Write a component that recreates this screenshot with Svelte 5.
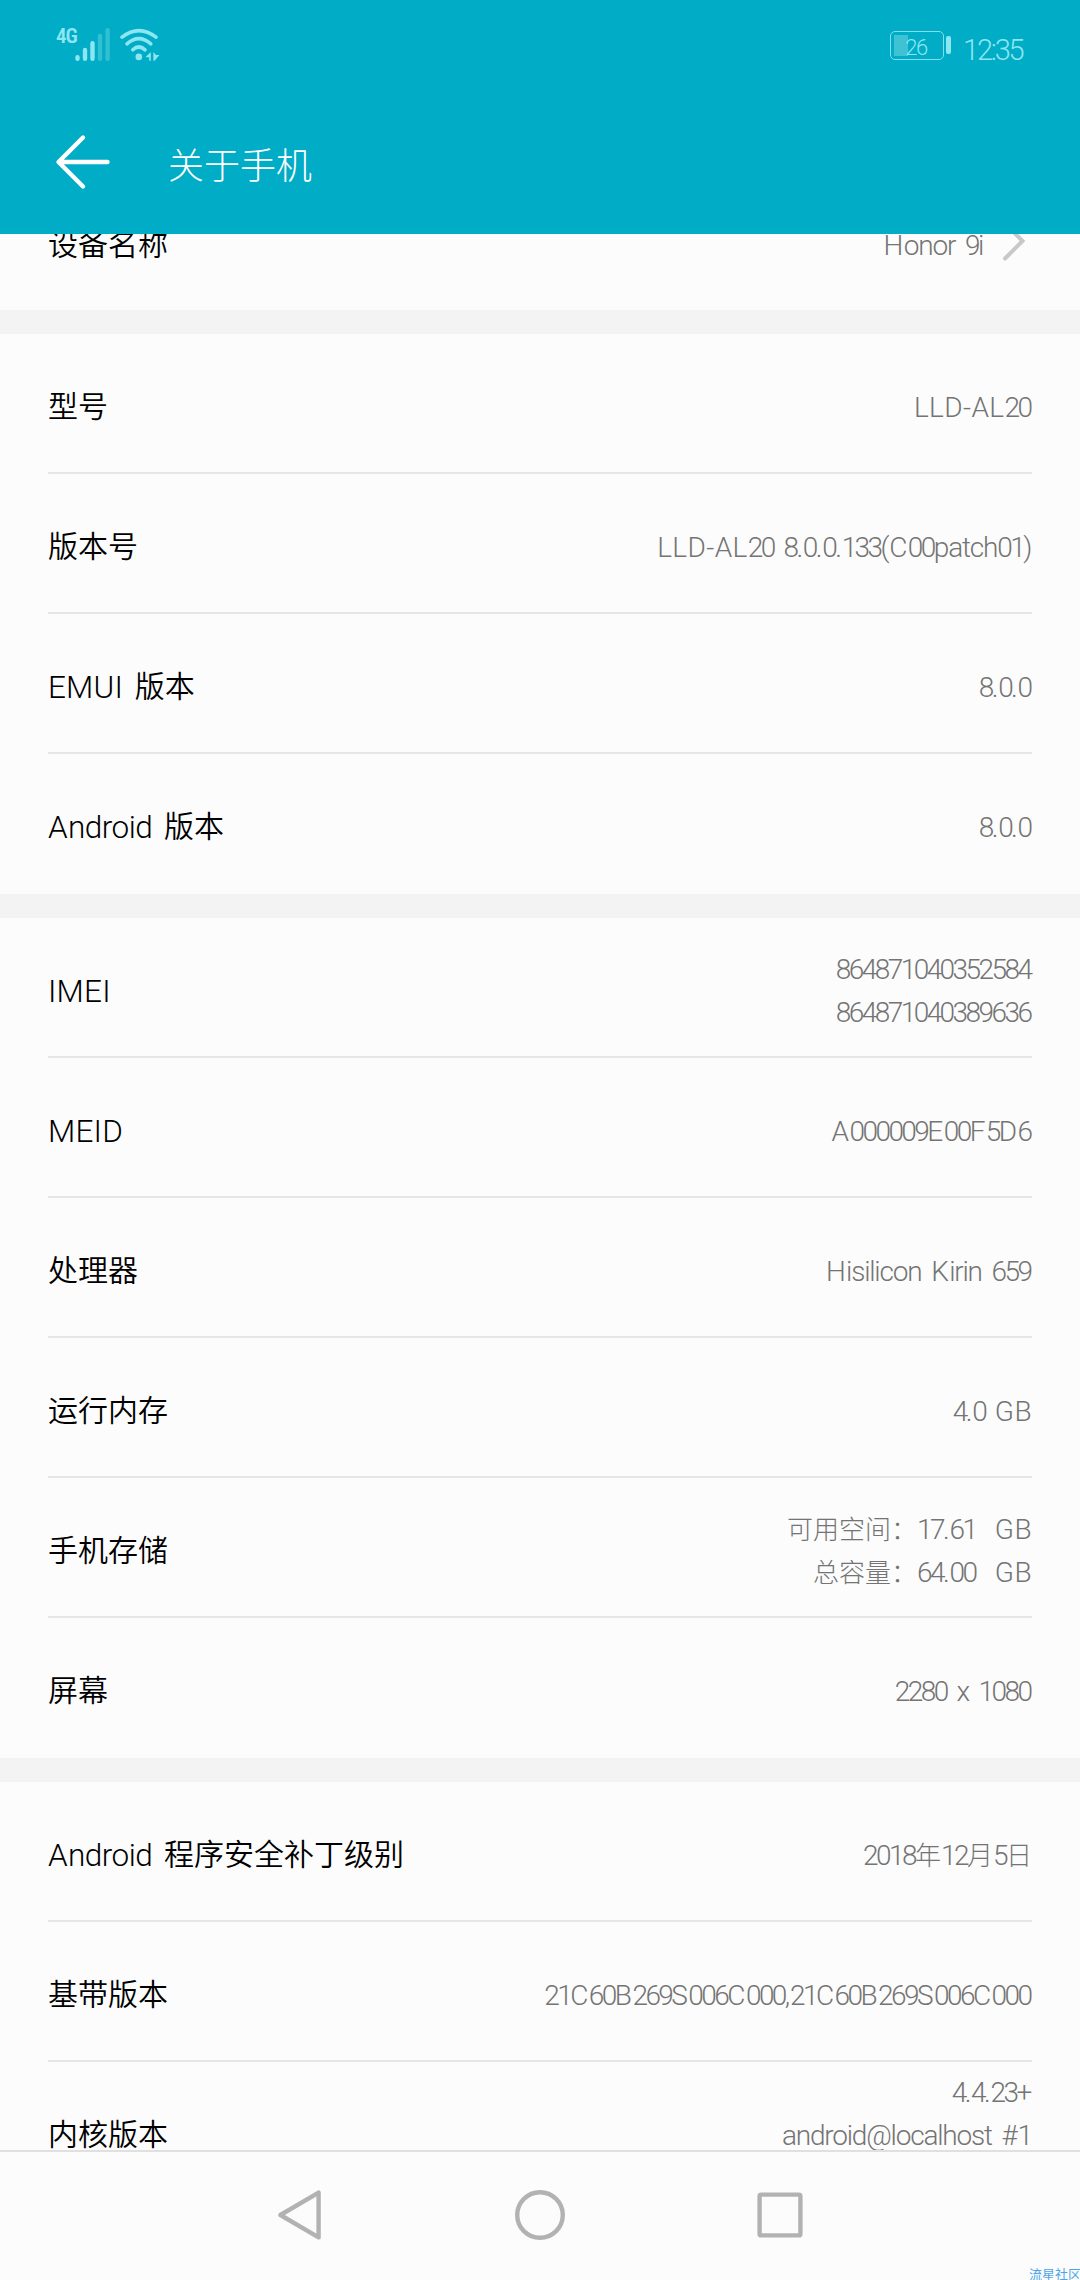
<script>
	const groups = [
		[{ label: '设备名称', values: ['Honor 9i'], link: true }],
		[
			{ label: '型号', values: ['LLD-AL20'] },
			{ label: '版本号', values: ['LLD-AL20 8.0.0.133(C00patch01)'] },
			{ label: 'EMUI 版本', values: ['8.0.0'] },
			{ label: 'Android 版本', values: ['8.0.0'] }
		],
		[
			{ label: 'IMEI', values: ['864871040352584', '864871040389636'] },
			{ label: 'MEID', values: ['A000009E00F5D6'] },
			{ label: '处理器', values: ['Hisilicon Kirin 659'] },
			{ label: '运行内存', values: ['4.0 GB'] },
			{ label: '手机存储', values: ['可用空间：17.61  GB', '总容量：64.00  GB'] },
			{ label: '屏幕', values: ['2280 x 1080'] }
		],
		[
			{ label: 'Android 程序安全补丁级别', values: ['2018年12月5日'] },
			{ label: '基带版本', values: ['21C60B269S006C000,21C60B269S006C000'] },
			{ label: '内核版本', values: ['4.4.23+', 'android@localhost #1', ''] }
		]
	]

	// digits, capitals, lowercase and Chinese are each spaced differently
	/** @param {string} text */
	function runs(text) {
		return text
			.split(/(\d+|[A-Z-]+|[a-z@]+|[\u3000-\u9fff\uff1a]+)/)
			.filter(Boolean)
			.map((t) => ({ t, kind: kindOf(t) }))
	}

	/** @param {string} t */
	function kindOf(t) {
		if (/^\d/.test(t)) return 'num'
		if (/^[A-Z]/.test(t)) return 'cap'
		if (/^[a-z@]/.test(t)) return 'low'
		return /^[\u3000-\uffff]/.test(t) ? 'han' : 'mark'
	}
</script>

{#snippet spaced(text)}{#each runs(text) as run}<span class={run.kind}>{run.t}</span>{/each}{/snippet}

<div class="screen" lang="zh-CN">
	<header>
		<div class="status">
			<span class="network">4G</span>
			<svg class="signal" width="35" height="34" viewBox="0 0 35 34">
				<g stroke-width="4.4" stroke-linecap="round">
					<path d="M2.5 29.2v1.6M10 22v8.8M17.5 15.2v15.6" stroke="#8de6f0" />
					<path d="M25 8v22.8M32.6 2.2v28.6" stroke="#33bfd3" />
				</g>
			</svg>
			<svg class="wifi" width="42" height="34" viewBox="0 0 42 34">
				<g fill="none" stroke="#8de6f0" stroke-width="3.6" stroke-linecap="round">
					<path d="M3 9.2Q20 -4 37 9.2" />
					<path d="M8 15.8Q19.8 5.6 31.8 15.8" />
					<path d="M13.8 21.8Q19.8 16.2 26 21.8" />
				</g>
				<circle cx="19.8" cy="28.9" r="3.3" fill="#8de6f0" />
				<path d="M26.6 28.9l5.2-5v8.9h-1.6v-3.2zM34.4 24v8.8h1.2L40.4 27H37z" fill="#8de6f0" />
			</svg>
			<div class="battery">
				<div class="level"></div>
				<span>26</span>
			</div>
			<div class="knob"></div>
			<time>12:35</time>
		</div>
		<div class="toolbar">
			<svg width="56" height="56" viewBox="0 0 56 56">
				<path d="M28 3.5L3.5 28L28 52.5M4.5 28H52.5" fill="none" stroke="#fff" stroke-width="4.4" stroke-linecap="round" stroke-linejoin="round" />
			</svg>
			<h1>关于手机</h1>
		</div>
	</header>

	<main>
		{#each groups as rows}
			<section>
				{#each rows as row}
					<div class="row">
						<span class="label">{@render spaced(row.label)}</span>
						<div class="value">
							{#each row.values as line}
								<p>{@render spaced(line)}</p>
							{/each}
						</div>
						{#if row.link}
							<svg width="49" height="40" viewBox="0 0 49 40">
								<path d="M22 -1.5L39.5 16L22 33.5" fill="none" stroke="#c8c8c8" stroke-width="4" stroke-linecap="round" />
							</svg>
						{/if}
					</div>
				{/each}
			</section>
		{/each}
	</main>

	<nav>
		<svg viewBox="0 0 60 60"><path d="M10.4 30L48.6 7.6V52.4Z" /></svg>
		<svg viewBox="0 0 60 60"><circle cx="30" cy="30" r="22.8" /></svg>
		<svg viewBox="0 0 60 60"><rect x="9.6" y="9.6" width="40.8" height="40.8" rx="1.5" /></svg>
	</nav>
	<span class="watermark">流星社区</span>
</div>

<style>
	:global(body) {
		background: #fcfcfc;
	}
	.screen {
		position: relative;
		display: flex;
		flex-direction: column;
		width: 1080px;
		height: 2280px;
		overflow: hidden;
		font-family: Roboto, 'Noto Sans CJK SC', sans-serif;
		font-weight: 300;
	}
	header {
		flex: none;
		height: 234px;
		background: #00acc6;
		color: #fff;
	}
	.status {
		display: flex;
		align-items: flex-start;
		height: 134px;
		padding: 28px 56px 0;
		box-sizing: border-box;
		color: #8de6f0;
	}
	.network {
		width: 19px;
		font-size: 21px;
		font-weight: 600;
		font-stretch: 75%;
		line-height: 16px;
		letter-spacing: -1px;
	}
	.wifi {
		margin-left: 9px;
	}
	.battery {
		position: relative;
		width: 54px;
		height: 29px;
		margin: 3px 2px 0 auto;
		box-sizing: border-box;
		border: 1.5px solid #7fe0ec;
		border-radius: 5px;
		font-size: 22px;
		line-height: 32px;
		text-align: center;
		letter-spacing: -1.4px;
	}
	.battery span {
		position: relative;
		margin-right: 2px;
	}
	.level {
		position: absolute;
		left: 3px;
		top: 3px;
		bottom: 3px;
		width: 14px;
		background: #40c2d5;
	}
	.knob {
		width: 5px;
		height: 18px;
		margin-top: 8px;
		border-radius: 2px;
		background: #8de6f0;
	}
	time {
		margin-left: 12px;
		width: 61px;
		font-size: 29px;
		line-height: 44px;
		letter-spacing: -2.2px;
	}
	.toolbar {
		display: flex;
		align-items: center;
		gap: 57px;
		height: 56px;
		padding-left: 55px;
	}
	h1 {
		margin: 9px 0 0;
		font-size: 36px;
		font-weight: 300;
		line-height: 50px;
	}
	main {
		flex: 1;
		min-height: 0;
		overflow: hidden;
		background: #f3f3f3;
	}
	section {
		margin-bottom: 24px;
		padding: 0 48px;
		background: #fcfcfc;
	}
	section:first-child {
		margin-top: -60px;
	}
	.row {
		display: flex;
		align-items: center;
		height: 140px;
		padding-top: 8px;
		box-sizing: border-box;
		border-bottom: 2px solid #e6e6e6;
	}
	.row:last-child {
		border-color: transparent;
	}
	section:first-child .row {
		height: 136px;
	}
	.label {
		flex: 1;
		color: #000;
		font-size: 31.5px;
		font-weight: 350;
		line-height: 42px;
		word-spacing: 4px;
	}
	.label .han {
		font-size: 30px;
	}
	.label .cap,
	.label .low {
		position: relative;
		top: 1px;
	}
	.label .cap {
		letter-spacing: 0.2px;
	}
	.label .low {
		letter-spacing: -0.5px;
	}
	.value {
		color: #747474;
		font-size: 28px;
		line-height: 43px;
		text-align: right;
		white-space: pre;
		letter-spacing: -0.3px;
		word-spacing: 3.2px;
	}
	.value p {
		height: 43px;
		margin: 0;
	}
	.value span {
		font-weight: 350;
	}
	.value .num {
		letter-spacing: -2.55px;
	}
	.value .num:last-child {
		margin-right: 1.5px;
	}
	.value .cap {
		letter-spacing: 0.4px;
	}
	.value .low {
		letter-spacing: -1.2px;
	}
	.value .han {
		font-size: 26px;
		font-weight: 300;
		letter-spacing: 0;
	}
	nav {
		display: flex;
		justify-content: center;
		align-items: center;
		gap: 180px;
		height: 130px;
		padding-bottom: 2px;
		box-sizing: border-box;
		border-top: 2px solid #e0e0e0;
		background: #fcfcfc;
	}
	nav svg {
		width: 60px;
		height: 60px;
		fill: none;
		stroke: #b2b2b2;
		stroke-width: 4.4;
		stroke-linejoin: round;
	}
	.watermark {
		position: absolute;
		right: -1px;
		bottom: -4px;
		color: #4ba6e8;
		font-size: 13px;
		font-weight: 400;
		line-height: 19px;
	}
</style>
